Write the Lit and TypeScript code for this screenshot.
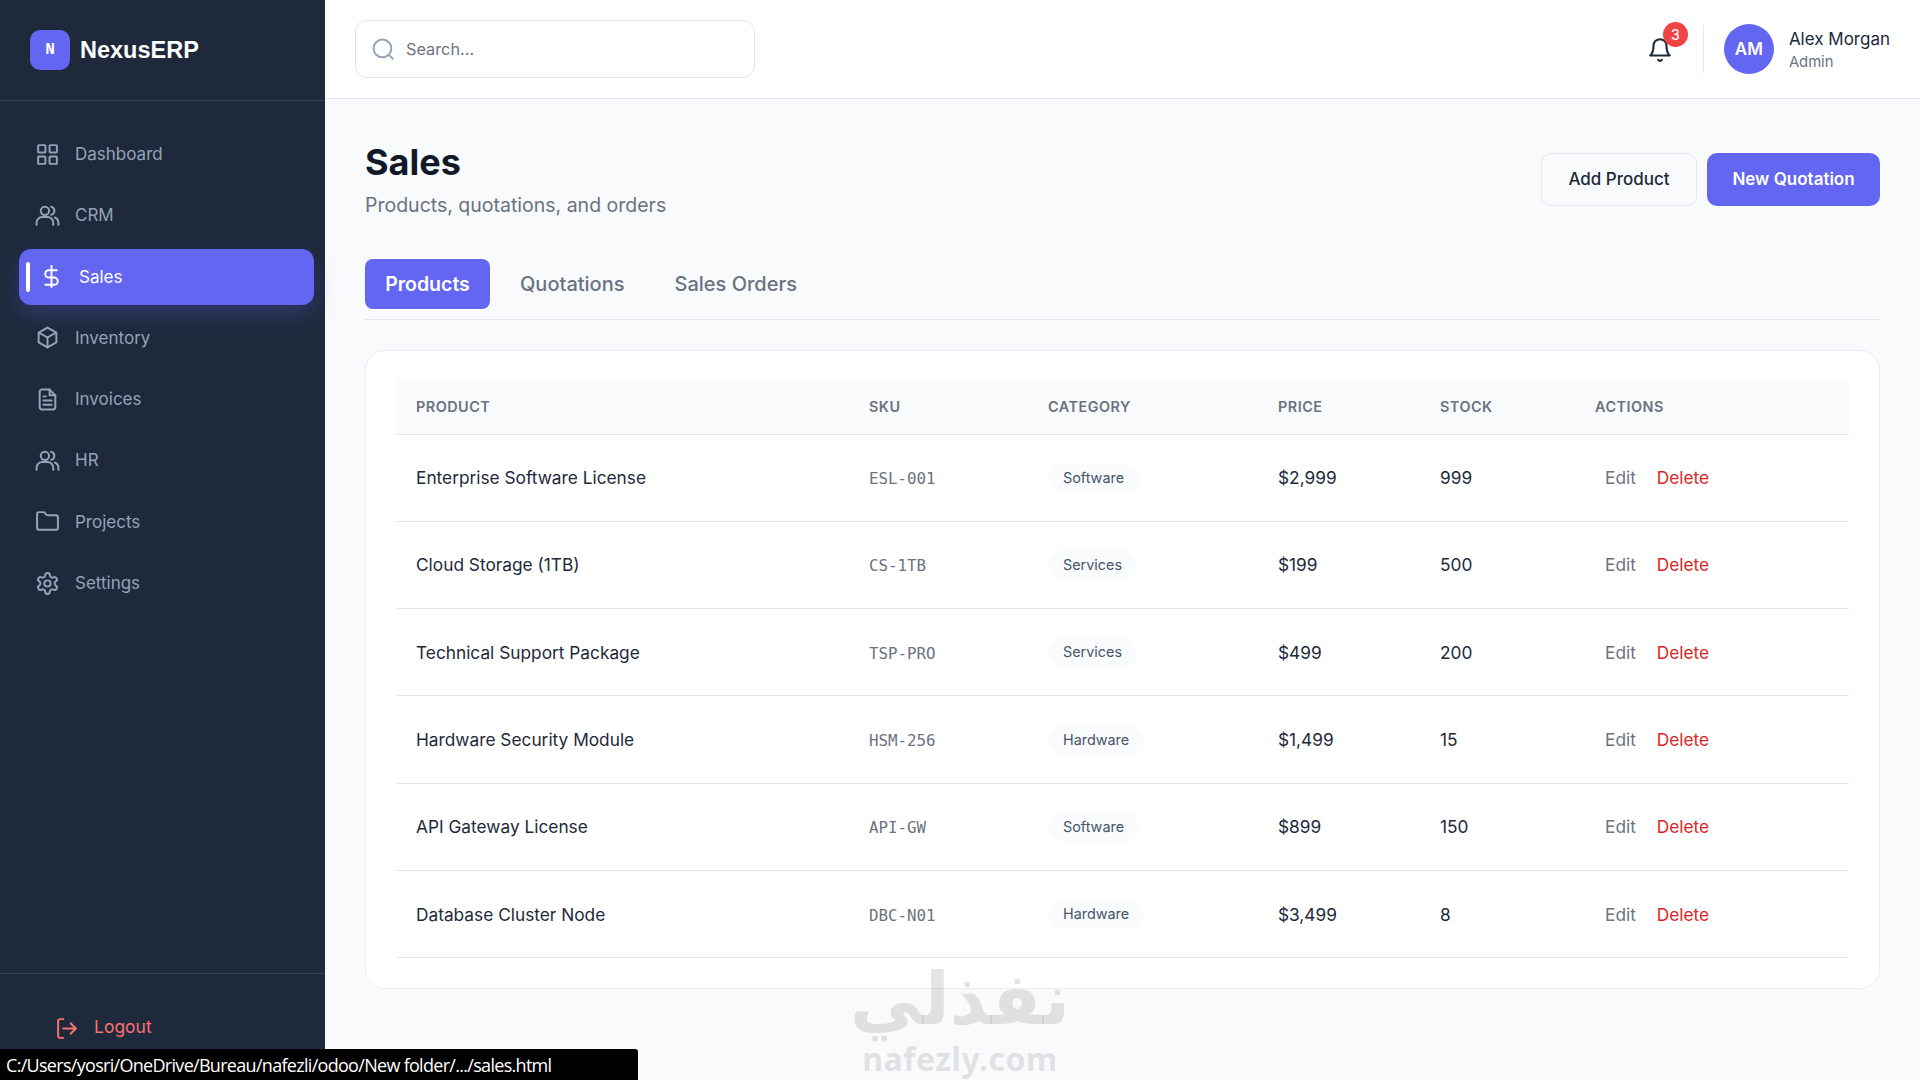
import {LitElement, html, css, svg} from 'lit';
import {customElement} from 'lit/decorators.js';

const icon = (body: unknown, size = 24) => html`<svg
  width=${size}
  height=${size}
  viewBox="0 0 24 24"
  fill="none"
  stroke="currentColor"
  stroke-width="1.9"
  stroke-linecap="round"
  stroke-linejoin="round"
>${body}</svg>`;

const users = svg`<circle cx="9.500" cy="7.500" r="4"/><path d="M1.500 21v-2A5.500 5.500 0 0 1 7 13.500h5a5.500 5.500 0 0 1 5.500 5.500v2"/><path d="M15.500 3.600a4 4 0 0 1 0 7.800"/><path d="M22.500 21v-2a5.500 5.500 0 0 0-3.500-5.100"/>`;

const NAV = [
  {label: 'Dashboard', icon: svg`<rect x="3" y="3" width="7" height="7" rx="0.600"/><rect x="14" y="3" width="7" height="7" rx="0.600"/><rect x="3" y="14" width="7" height="7" rx="0.600"/><rect x="14" y="14" width="7" height="7" rx="0.600"/>`},
  {label: 'CRM', icon: users},
  {label: 'Sales', active: true, icon: svg`<path d="M12 2v20"/><path d="M17 6H9.500a3.500 3.500 0 0 0 0 7h5a3.500 3.500 0 0 1 0 7H6"/>`},
  {label: 'Inventory', icon: svg`<path d="M12 2.500l8.500 4.800v9.400L12 21.500l-8.500-4.800V7.300z"/><path d="M3.800 7.400L12 12l8.200-4.600"/><path d="M12 12v9.500"/>`},
  {label: 'Invoices', icon: svg`<path d="M14 2.500H6.500a2 2 0 0 0-2 2v15a2 2 0 0 0 2 2h11a2 2 0 0 0 2-2V8z"/><path d="M14 2.500V8h5.500"/><path d="M8 9h2.500"/><path d="M8 13h8"/><path d="M8 17h8"/>`},
  {label: 'HR', icon: users},
  {label: 'Projects', icon: svg`<path d="M20 20a2 2 0 0 0 2-2V8a2 2 0 0 0-2-2h-7.900a2 2 0 0 1-1.700-.9l-.8-1.200A2 2 0 0 0 7.900 3H4a2 2 0 0 0-2 2v13a2 2 0 0 0 2 2z"/>`},
  {label: 'Settings', icon: svg`<path d="M12.220 2h-.440a2 2 0 0 0-2 2v.180a2 2 0 0 1-1 1.730l-.430.250a2 2 0 0 1-2 0l-.150-.080a2 2 0 0 0-2.730.730l-.220.380a2 2 0 0 0 .730 2.730l.150.100a2 2 0 0 1 1 1.720v.510a2 2 0 0 1-1 1.740l-.150.090a2 2 0 0 0-.730 2.730l.220.380a2 2 0 0 0 2.730.730l.150-.080a2 2 0 0 1 2 0l.430.250a2 2 0 0 1 1 1.730V20a2 2 0 0 0 2 2h.440a2 2 0 0 0 2-2v-.180a2 2 0 0 1 1-1.730l.430-.250a2 2 0 0 1 2 0l.150.080a2 2 0 0 0 2.730-.730l.220-.390a2 2 0 0 0-.730-2.730l-.150-.080a2 2 0 0 1-1-1.740v-.500a2 2 0 0 1 1-1.740l.150-.090a2 2 0 0 0 .730-2.730l-.220-.380a2 2 0 0 0-2.730-.730l-.150.080a2 2 0 0 1-2 0l-.430-.250a2 2 0 0 1-1-1.730V4a2 2 0 0 0-2-2z"/><circle cx="12" cy="12" r="3"/>`},
];

const PRODUCTS = [
  ['Enterprise Software License', 'ESL-001', 'Software', '$2,999', '999'],
  ['Cloud Storage (1TB)', 'CS-1TB', 'Services', '$199', '500'],
  ['Technical Support Package', 'TSP-PRO', 'Services', '$499', '200'],
  ['Hardware Security Module', 'HSM-256', 'Hardware', '$1,499', '15'],
  ['API Gateway License', 'API-GW', 'Software', '$899', '150'],
  ['Database Cluster Node', 'DBC-N01', 'Hardware', '$3,499', '8'],
];

@customElement('app-root')
export class AppRoot extends LitElement {
  static styles = css`
    :host {
      display: block;
      height: 1080px;
      overflow: hidden;
      position: relative;
      font-family: Inter, 'Noto Sans', sans-serif;
      color: #1e293b;
      background: #f8fafc;
    }
    * {
      box-sizing: border-box;
    }
    .app {
      display: flex;
      height: 100%;
    }
    .sidebar {
      width: 325px;
      flex: none;
      background: #1e293b;
      display: flex;
      flex-direction: column;
    }
    .brand {
      height: 101px;
      flex: none;
      padding-left: 30px;
      display: flex;
      align-items: center;
      gap: 10px;
      border-bottom: 1px solid #334155;
    }
    .logo {
      width: 40px;
      height: 40px;
      border-radius: 10px;
      background: #6366f1;
      color: #fff;
      display: flex;
      align-items: center;
      justify-content: center;
      font: 700 16px 'Liberation Mono', monospace;
    }
    .brand-name {
      color: #fff;
      font: 700 23.500px 'Liberation Sans', sans-serif;
    }
    nav {
      flex: 1;
      padding: 25px 11px 0 19px;
      display: flex;
      flex-direction: column;
      gap: 5.300px;
    }
    .nav-item {
      height: 56px;
      padding-left: 16px;
      display: flex;
      align-items: center;
      gap: 15px;
      border-radius: 12px;
      color: #94a3b8;
      font-size: 17px;
      position: relative;
    }
    .nav-item.active {
      padding-left: 20px;
      background: #6366f1;
      color: #fff;
      box-shadow: 0 10px 25px rgba(99, 102, 241, 0.25);
    }
    .nav-item.active::before {
      content: '';
      position: absolute;
      left: 7px;
      top: 13px;
      width: 4px;
      height: 30px;
      border-radius: 2px;
      background: #fff;
    }
    .logout {
      height: 107px;
      flex: none;
      border-top: 1px solid #334155;
      padding: 42px 0 0 55px;
      display: flex;
      align-items: flex-start;
      gap: 14px;
      color: #f87171;
      font-size: 17.500px;
    }
    .main {
      flex: 1;
      min-width: 0;
      display: flex;
      flex-direction: column;
    }
    .topbar {
      height: 99px;
      flex: none;
      background: #fff;
      border-bottom: 1px solid #e2e8f0;
      padding: 0 30px;
      display: flex;
      align-items: center;
      justify-content: space-between;
    }
    .search {
      width: 400px;
      height: 58px;
      border: 1px solid #e5e7eb;
      border-radius: 12px;
      padding-left: 15px;
      display: flex;
      align-items: center;
      gap: 10px;
      color: #6b7280;
      font-size: 16.300px;
    }
    .search svg {
      color: #94a3b8;
    }
    .user-area {
      display: flex;
      align-items: center;
    }
    .bell {
      position: relative;
      width: 24px;
      height: 24px;
      margin-right: 32px;
      color: #1e293b;
    }
    .badge {
      position: absolute;
      left: 16px;
      top: -15px;
      width: 25px;
      height: 25px;
      border-radius: 50%;
      background: #ef4444;
      color: #fff;
      font-size: 14px;
      font-weight: 500;
      display: flex;
      align-items: center;
      justify-content: center;
    }
    .divider {
      width: 1px;
      height: 48px;
      background: #e5e7eb;
      margin-right: 20px;
    }
    .avatar {
      width: 50px;
      height: 50px;
      border-radius: 50%;
      background: #6366f1;
      color: #fff;
      font-weight: 600;
      font-size: 17px;
      display: flex;
      align-items: center;
      justify-content: center;
      margin-right: 15px;
    }
    .user-name {
      font-size: 17px;
      line-height: 22px;
      margin-top: 2px;
    }
    .user-role {
      font-size: 14.800px;
      line-height: 20px;
      color: #6b7280;
      margin-top: 2px;
    }
    .content {
      flex: 1;
      padding: 40px 40px 0 40px;
    }
    .page-head {
      display: flex;
      justify-content: space-between;
      align-items: flex-start;
    }
    h1 {
      margin: 0;
      font-size: 36px;
      line-height: 46px;
      font-weight: 700;
      color: #111827;
    }
    .subtitle {
      margin-top: 7px;
      font-size: 19.500px;
      line-height: 26px;
      color: #6b7280;
    }
    .buttons {
      display: flex;
      gap: 10px;
      margin-top: 14px;
    }
    .btn {
      height: 53px;
      padding-bottom: 1px;
      border-radius: 10px;
      display: flex;
      align-items: center;
      justify-content: center;
      font-size: 17px;
      font-weight: 500;
    }
    .btn.ghost {
      width: 156px;
      border: 1px solid #e5e7eb;
      color: #1e293b;
    }
    .btn.primary {
      width: 173px;
      background: #6366f1;
      color: #fff;
      font-weight: 600;
    }
    .tabs {
      margin-top: 41px;
      height: 61px;
      border-bottom: 1px solid #e5e7eb;
      display: flex;
      gap: 10px;
      align-items: flex-start;
    }
    .tab {
      height: 50px;
      padding: 0 20px;
      border-radius: 8px;
      display: flex;
      align-items: center;
      font-size: 20px;
      font-weight: 500;
      color: #6b7280;
    }
    .tab.active {
      width: 125px;
      padding: 0;
      justify-content: center;
      font-size: 19.500px;
      background: #6366f1;
      color: #fff;
      font-weight: 600;
    }
    .card {
      margin-top: 30px;
      width: 1515px;
      height: 639px;
      background: #fff;
      border: 1px solid #eaeef3;
      border-radius: 20px;
      padding: 28px 30px 0;
    }
    table {
      width: 100%;
      table-layout: fixed;
      border-collapse: collapse;
    }
    th {
      height: 55px;
      background: #f8fafc;
      border-bottom: 1px solid #e5e7eb;
      padding: 0 20px;
      text-align: left;
      font-size: 14.400px;
      font-weight: 600;
      letter-spacing: 0.5px;
      color: #6b7280;
    }
    td {
      height: 87.300px;
      border-bottom: 1px solid #e5e7eb;
      padding: 0 20px;
      font-size: 17.300px;
      color: #1e293b;
    }
    .c1 { width: 453px; }
    .c2 { width: 179px; }
    .c3 { width: 230px; }
    .c4 { width: 162px; }
    .c5 { width: 155px; }
    .sku {
      font: 15.800px 'DejaVu Sans Mono', monospace;
      color: #6b7280;
    }
    .pill {
      display: inline-block;
      padding: 6px 15px;
      border-radius: 15px;
      background: #f9fbfd;
      font-size: 14.400px;
      line-height: 18px;
      color: #475569;
    }
    .edit {
      color: #6b7280;
      margin-left: 10px;
    }
    .delete {
      color: #dc2626;
      margin-left: 21px;
    }
    .status {
      position: absolute;
      left: 0;
      bottom: 0;
      width: 638px;
      height: 31px;
      background: #000;
      color: #fff;
      border-top-right-radius: 3px;
      padding-left: 6px;
      font: 18px/32px 'Open Sans', sans-serif;
      letter-spacing: -0.700px;
      white-space: nowrap;
    }
    .watermark {
      position: absolute;
      left: 845px;
      top: 959px;
      width: 230px;
      text-align: center;
      color: rgba(120, 120, 120, 0.2);
      pointer-events: none;
    }
    .wm-ar {
      font: 700 72px/80px 'DejaVu Sans', sans-serif;
    }
    .wm-en {
      font: 700 32px/40px 'Noto Sans', sans-serif;
      letter-spacing: 0.500px;
    }
  `;

  render() {
    return html`
      <div class="app">
        <aside class="sidebar">
          <div class="brand">
            <div class="logo">N</div>
            <div class="brand-name">NexusERP</div>
          </div>
          <nav>
            ${NAV.map(
              (item) => html`<div class="nav-item ${item.active ? 'active' : ''}">
                ${icon(item.icon, 25)}<span>${item.label}</span>
              </div>`
            )}
          </nav>
          <div class="logout">
            ${icon(
              svg`<path d="M8 3H5a2 2 0 0 0-2 2v14a2 2 0 0 0 2 2h3"/><path d="M15 7l5 5-5 5"/><path d="M20 12H8"/>`,
              25
            )}<span>Logout</span>
          </div>
        </aside>
        <div class="main">
          <header class="topbar">
            <div class="search">
              ${icon(svg`<circle cx="11" cy="11" r="8.500"/><path d="M21 21l-3.800-3.800"/>`, 25)}
              <span>Search...</span>
            </div>
            <div class="user-area">
              <div class="bell">
                ${icon(
                  svg`<path d="M6 8a6 6 0 0 1 12 0c0 7 3 9 3 9H3s3-2 3-9"/><path d="M10.300 21a1.900 1.900 0 0 0 3.400 0"/>`,
                  26
                )}
                <div class="badge">3</div>
              </div>
              <div class="divider"></div>
              <div class="avatar">AM</div>
              <div>
                <div class="user-name">Alex Morgan</div>
                <div class="user-role">Admin</div>
              </div>
            </div>
          </header>
          <main class="content">
            <div class="page-head">
              <div>
                <h1>Sales</h1>
                <div class="subtitle">Products, quotations, and orders</div>
              </div>
              <div class="buttons">
                <div class="btn ghost">Add Product</div>
                <div class="btn primary">New Quotation</div>
              </div>
            </div>
            <div class="tabs">
              <div class="tab active">Products</div>
              <div class="tab">Quotations</div>
              <div class="tab">Sales Orders</div>
            </div>
            <section class="card">
              <table>
                <thead>
                  <tr>
                    <th class="c1">PRODUCT</th>
                    <th class="c2">SKU</th>
                    <th class="c3">CATEGORY</th>
                    <th class="c4">PRICE</th>
                    <th class="c5">STOCK</th>
                    <th>ACTIONS</th>
                  </tr>
                </thead>
                <tbody>
                  ${PRODUCTS.map(
                    ([name, sku, cat, price, stock]) => html`<tr>
                      <td>${name}</td>
                      <td><span class="sku">${sku}</span></td>
                      <td><span class="pill">${cat}</span></td>
                      <td>${price}</td>
                      <td>${stock}</td>
                      <td><span class="edit">Edit</span><span class="delete">Delete</span></td>
                    </tr>`
                  )}
                </tbody>
              </table>
            </section>
          </main>
        </div>
      </div>
      <div class="watermark">
        <div class="wm-ar" lang="ar">نفذلي</div>
        <div class="wm-en">nafezly.com</div>
      </div>
      <div class="status">C:/Users/yosri/OneDrive/Bureau/nafezli/odoo/New folder/.../sales.html</div>
    `;
  }
}
